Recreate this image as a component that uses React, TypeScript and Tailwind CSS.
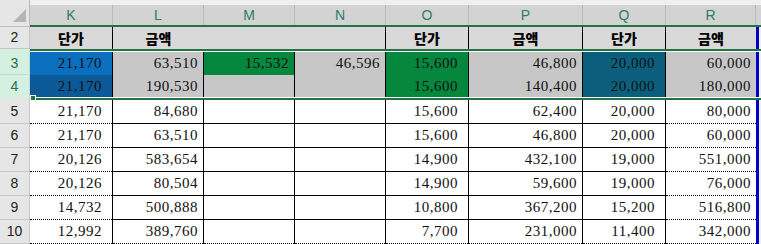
const cols = [
  { key: "K", w: "w-[83px]", price: true, border: true },
  { key: "L", w: "w-[91px]", price: false, border: true },
  { key: "M", w: "w-[91px]", price: false, border: true },
  { key: "N", w: "w-[91px]", price: false, border: true },
  { key: "O", w: "w-[83px]", price: true, border: true },
  { key: "P", w: "w-[114px]", price: false, border: true },
  { key: "Q", w: "w-[83px]", price: true, border: true },
  { key: "R", w: "w-[90px]", price: false, border: false },
];

const GRAY = "bg-[#c7c7c7]";
const BLUE = "bg-[#0b6fc0]";
const NAVY = "bg-[#0b5a97]";
const GREEN = "bg-[#06873e]";
const TEAL = "bg-[#0b5f7c]";

const body: string[][] = [
  ["21,170", "84,680", "", "", "15,600", "62,400", "20,000", "80,000"],
  ["21,170", "63,510", "", "", "15,600", "46,800", "20,000", "60,000"],
  ["20,126", "583,654", "", "", "14,900", "432,100", "19,000", "551,000"],
  ["20,126", "80,504", "", "", "14,900", "59,600", "19,000", "76,000"],
  ["14,732", "500,888", "", "", "10,800", "367,200", "15,200", "516,800"],
  ["12,992", "389,760", "", "", "7,700", "231,000", "11,400", "342,000"],
];

type Line = "solid" | "dotted" | "none";

function Cell({
  col,
  text,
  bg,
  bottom,
}: {
  col: (typeof cols)[number];
  text: string;
  bg: string;
  bottom: Line;
}) {
  return (
    <div className={`${col.w} ${bg} flex flex-col ${col.border ? "border-r border-black" : ""}`}>
      <div
        className={`flex flex-1 items-center justify-end font-['Liberation_Serif',serif] text-[15px] tracking-[0.5px] text-[#111] ${
          col.price ? "pr-[10px]" : "pr-[5px]"
        }`}
      >
        {text}
      </div>
      {bottom === "solid" && <div className="h-px bg-black" />}
      {bottom === "dotted" && <div className="border-b border-dotted border-black" />}
    </div>
  );
}

function RowHead({ n, selected }: { n: number; selected?: boolean }) {
  return (
    <div
      className={`flex w-[30px] items-center justify-center border-r border-b font-['Liberation_Sans',sans-serif] text-[14px] ${
        selected
          ? "border-[#c3dccf] bg-[#d3f0e0] text-[#217346]"
          : "border-[#c6c6c6] bg-[#e6e6e6] text-[#222]"
      }`}
    >
      {n}
    </div>
  );
}

function RightEdge() {
  return (
    <>
      <div className="w-[3px] bg-[#0000cc]" />
      <div className="w-[2px] bg-[#f0f0f0]" />
    </>
  );
}

export default function App() {
  const row3 = ["21,170", "63,510", "15,532", "46,596", "15,600", "46,800", "20,000", "60,000"];
  const row3bg = [BLUE, GRAY, GREEN, GRAY, GREEN, GRAY, TEAL, GRAY];
  const row4 = ["21,170", "190,530", "", "", "15,600", "140,400", "20,000", "180,000"];
  const row4bg = [NAVY, GRAY, GRAY, GRAY, GREEN, GRAY, TEAL, GRAY];

  return (
    <div className="relative h-[244px] w-[761px] overflow-hidden bg-white">
      {/* column letters */}
      <div className="flex h-[27px]">
        <div className="relative w-[30px] border-r border-b border-[#bdbdbd] bg-[#e6e6e6]">
          <svg className="absolute left-0 top-0" width="30" height="27" viewBox="0 0 30 27">
            <polygon points="13,22 26,9 26,22" fill="#b5b5b5" />
          </svg>
        </div>
        <div className="flex flex-1 flex-col">
          <div className="h-[5px] bg-[#f0f0f0]" />
          <div className="flex h-[20px] bg-[#d3d3d3]">
            {cols.map((c) => (
              <div
                key={c.key}
                className={`${c.w} flex items-center justify-center border-r border-[#bcbcbc] font-['Liberation_Sans',sans-serif] text-[14px] text-[#2f7d69]`}
              >
                {c.key}
              </div>
            ))}
            <div className="flex-1" />
          </div>
          <div className="h-[2px] bg-[#217346]" />
        </div>
      </div>

      {/* row 2 */}
      <div className="flex h-[22px]">
        <RowHead n={2} />
        {cols.map((c, i) => (
          <div
            key={c.key}
            className={`${c.w} flex items-center justify-center bg-[#d9d9d9] font-['Noto_Sans_CJK_KR',sans-serif] text-[14px] font-black text-black ${
              i === 1 || i === 2 || i === 7 ? "" : "border-r border-black"
            }`}
          >
            {i === 0 || i === 4 || i === 6 ? "단가" : i === 1 || i === 5 || i === 7 ? "금액" : ""}
          </div>
        ))}
        <RightEdge />
      </div>

      {/* selection top */}
      <div className="flex h-[2px]">
        <div className="w-[30px] border-r border-[#c3dccf] bg-[#d3f0e0]" />
        <div className="flex-1 bg-[#217346]" />
      </div>
      <div className="flex h-px">
        <div className="w-[30px] border-r border-[#c3dccf] bg-[#d3f0e0]" />
        <div className="flex-1 bg-white" />
      </div>

      {/* row 3 */}
      <div className="flex h-[23px]">
        <RowHead n={3} selected />
        {cols.map((c, i) => (
          <Cell key={c.key} col={c} text={row3[i]} bg={row3bg[i]} bottom={i === 7 ? "dotted" : "solid"} />
        ))}
        <RightEdge />
      </div>

      {/* row 4 */}
      <div className="flex h-[22px]">
        <div className="flex w-[30px] items-center justify-center border-r border-[#c3dccf] bg-[#d3f0e0] font-['Liberation_Sans',sans-serif] text-[14px] text-[#217346]">
          4
        </div>
        {cols.map((c, i) => (
          <Cell key={c.key} col={c} text={row4[i]} bg={row4bg[i]} bottom="none" />
        ))}
        <RightEdge />
      </div>

      {/* selection bottom */}
      <div className="flex h-px">
        <div className="w-[30px] border-r border-[#c3dccf] bg-[#d3f0e0]" />
        <div className="flex-1 bg-white" />
      </div>
      <div className="flex h-[2px]">
        <div className="w-[30px] border-r border-[#c6c6c6] bg-[#e6e6e6]" />
        <div className="flex-1 bg-[#217346]" />
      </div>

      {/* rows 5-10 */}
      {body.map((r, ri) => (
        <div key={ri} className="flex h-[24px]">
          <RowHead n={ri + 5} />
          {cols.map((c, i) => (
            <Cell
              key={c.key}
              col={c}
              text={r[i]}
              bg="bg-white"
              bottom={ri === body.length - 1 || i === 0 || i === 7 ? "dotted" : "solid"}
            />
          ))}
          <RightEdge />
        </div>
      ))}

      {/* fill handle */}
      <div className="absolute left-[30px] top-[95px] h-[6px] w-[6px] border border-white bg-[#217346]" />
    </div>
  );
}
